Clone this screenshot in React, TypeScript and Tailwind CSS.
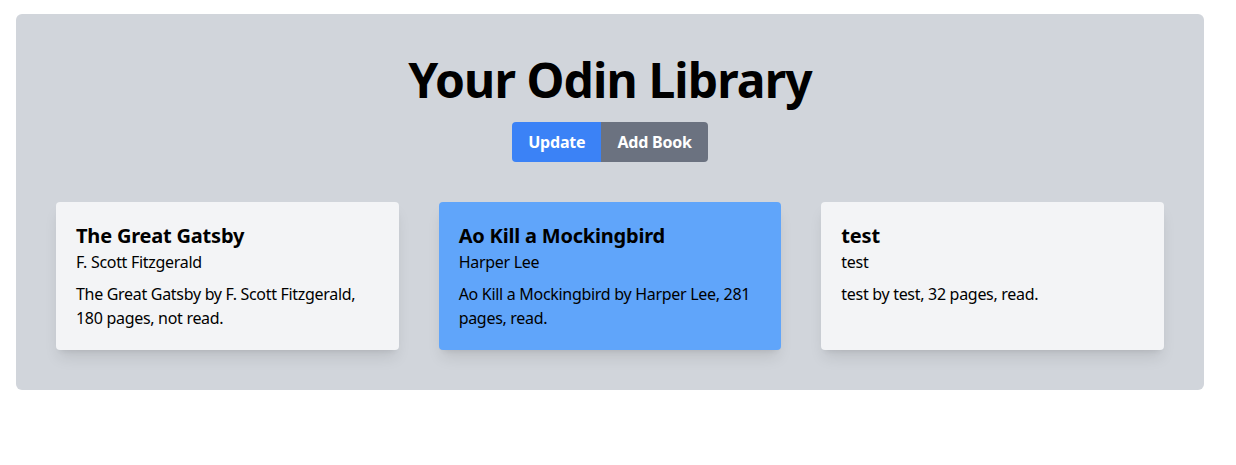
import React from "react";

const books = [
  { title: "The Great Gatsby", author: "F. Scott Fitzgerald", desc: "The Great Gatsby by F. Scott Fitzgerald, 180 pages, not read.", bg: "bg-[#f3f4f6]" },
  { title: "Ao Kill a Mockingbird", author: "Harper Lee", desc: "Ao Kill a Mockingbird by Harper Lee, 281 pages, read.", bg: "bg-[#60a5fa]" },
  { title: "test", author: "test", desc: "test by test, 32 pages, read.", bg: "bg-[#f3f4f6]" },
];

export default function App() {
  return (
    <div className="min-h-screen bg-white pt-[14px] pl-4 text-black" style={{ fontFamily: '"Noto Sans", "Open Sans", sans-serif' }}>
      <div className="w-[1188px] rounded-md bg-[#d1d5db] px-10 pt-[42px] pb-10">
        <h1 className="text-center text-5xl leading-[48px] font-bold tracking-[-0.9px]">Your Odin Library</h1>
        <div className="mt-[18px] flex justify-center">
          <div className="flex overflow-hidden rounded">
            <button className="bg-[#3b82f6] px-4 py-2 text-base leading-6 font-bold tracking-[-0.2px] text-white">Update</button>
            <button className="bg-[#6b7280] px-4 py-2 text-base leading-6 font-bold tracking-[-0.2px] text-white">Add Book</button>
          </div>
        </div>
        <div className="mt-10 grid grid-cols-3 gap-10">
          {books.map((b) => (
            <div key={b.title} className={`${b.bg} rounded p-5 shadow-lg`}>
              <h2 className="text-xl leading-7 font-bold tracking-[-0.2px]">{b.title}</h2>
              <p className="text-base leading-6 tracking-[-0.3px]">{b.author}</p>
              <p className="mt-2 text-base leading-6 tracking-[-0.3px]">{b.desc}</p>
            </div>
          ))}
        </div>
      </div>
    </div>
  );
}
